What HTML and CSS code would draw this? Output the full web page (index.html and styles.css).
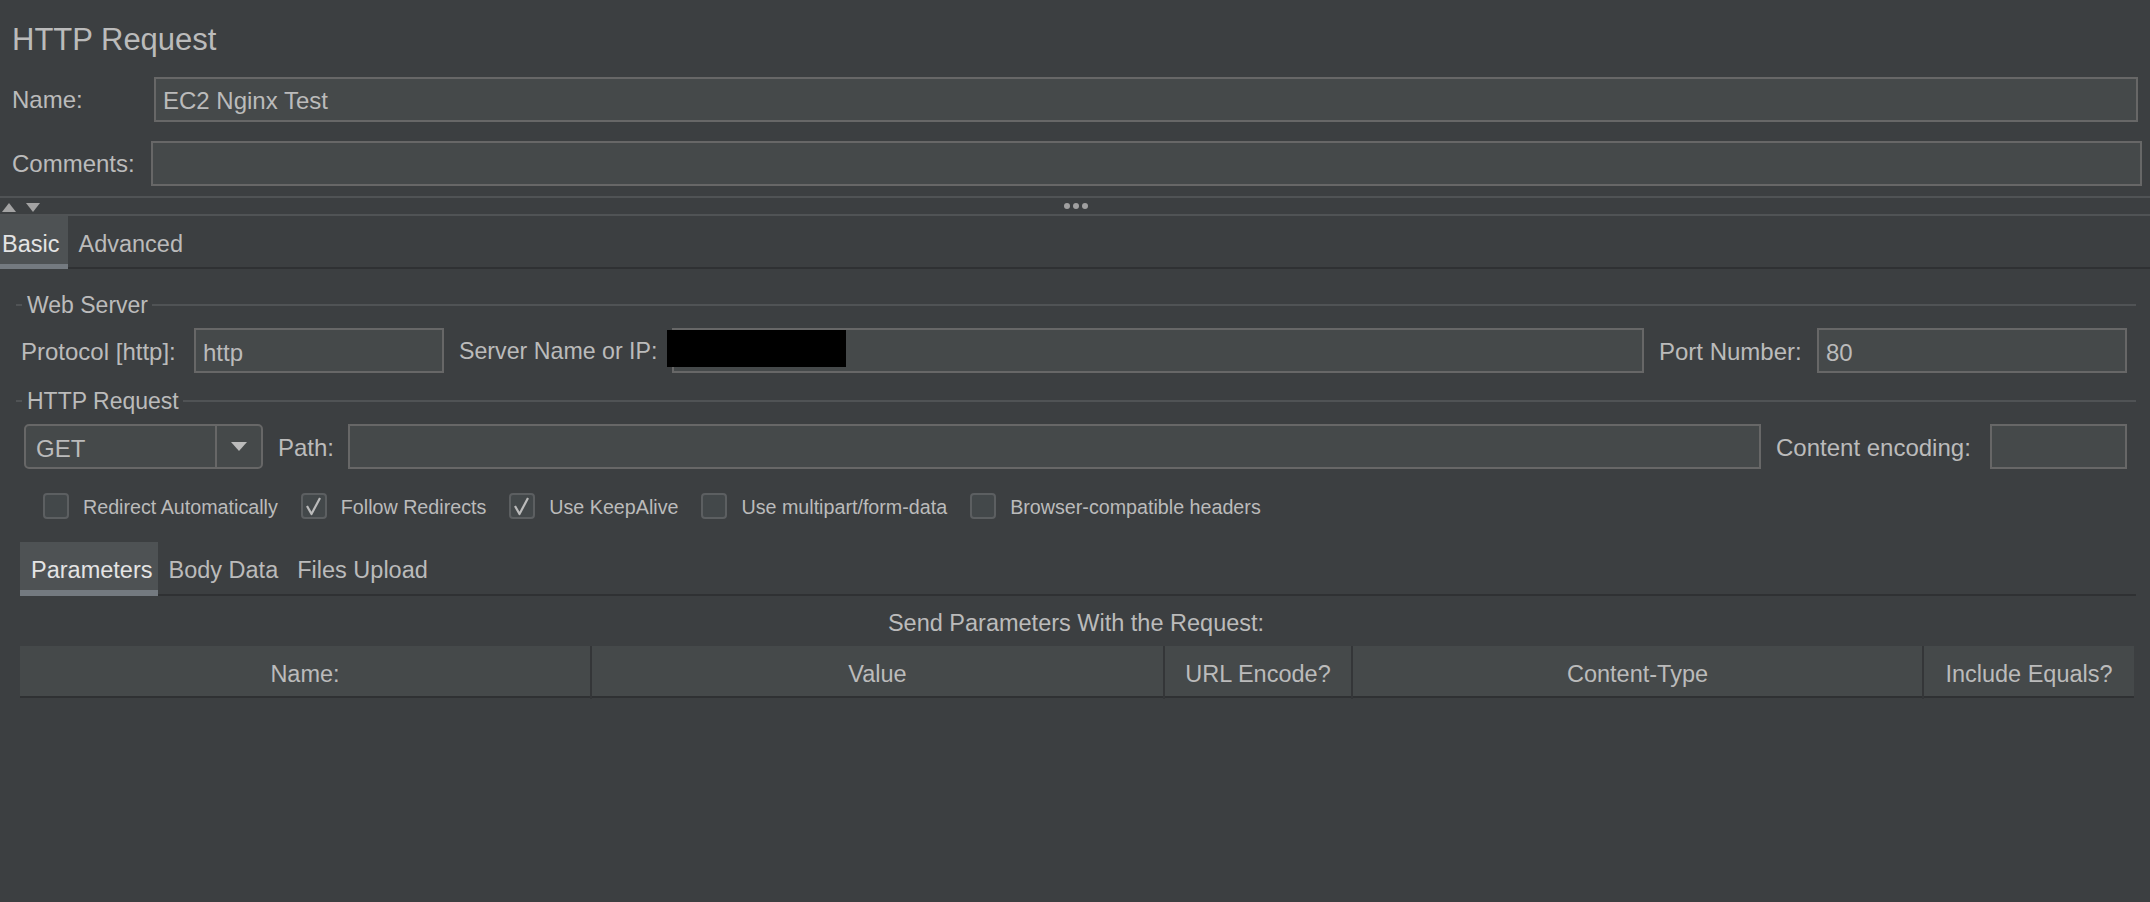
FILE: index.html
```html
<!DOCTYPE html>
<html>
<head>
<meta charset="utf-8">
<title>HTTP Request</title>
<link rel="stylesheet" href="styles.css">
</head>
<body>
<div class="title">HTTP Request</div>

<div class="form-row name-row">
  <span class="lbl">Name:</span>
  <div class="field">EC2 Nginx Test</div>
</div>
<div class="form-row comments-row">
  <span class="lbl">Comments:</span>
  <div class="field"></div>
</div>

<div class="splitter">
  <svg class="arrows" width="42" height="16" viewBox="0 0 42 16">
    <polygon points="2,14 16,14 9,5" fill="#a3a3a3"/>
    <polygon points="26,5 40,5 33,14" fill="#a3a3a3"/>
  </svg>
  <svg class="dots" width="26" height="16" viewBox="0 0 26 16">
    <circle cx="4" cy="8" r="3" fill="#a0a0a0"/>
    <circle cx="13" cy="8" r="3" fill="#a0a0a0"/>
    <circle cx="22" cy="8" r="3" fill="#a0a0a0"/>
  </svg>
  <span></span>
</div>

<div class="tabs main-tabs">
  <div class="tab active tab-basic">Basic</div>
  <div class="tab">Advanced</div>
</div>

<div class="basic">
  <div class="legend legend-first"><span>Web Server</span></div>
  <div class="frow frow-server">
    <span class="lbl lbl-protocol">Protocol [http]:</span>
    <div class="field f-protocol">http</div>
    <span class="lbl lbl-server">Server Name or IP:</span>
    <div class="field f-server"><span class="redact"></span></div>
    <span class="lbl lbl-port">Port Number:</span>
    <div class="field f-port">80</div>
  </div>

  <div class="legend legend-second"><span>HTTP Request</span></div>
  <div class="frow frow-path">
    <div class="combo">
      <span class="combo-text">GET</span>
      <span class="combo-btn">
        <svg width="16" height="9" viewBox="0 0 16 9"><polygon points="0,0 16,0 8,9" fill="#bbbbbb"/></svg>
      </span>
    </div>
    <span class="lbl lbl-path">Path:</span>
    <div class="field f-path"></div>
    <span class="lbl lbl-enc">Content encoding:</span>
    <div class="field f-enc"></div>
  </div>

  <div class="checks">
    <label class="check"><span class="box"></span><span>Redirect Automatically</span></label>
    <label class="check"><span class="box"><svg width="22" height="22" viewBox="0 0 22 22"><path d="M4 11 L8.5 19 L17 3" fill="none" stroke="#bbbbbb" stroke-width="2.2" stroke-linejoin="round"/></svg></span><span>Follow Redirects</span></label>
    <label class="check"><span class="box"><svg width="22" height="22" viewBox="0 0 22 22"><path d="M4 11 L8.5 19 L17 3" fill="none" stroke="#bbbbbb" stroke-width="2.2" stroke-linejoin="round"/></svg></span><span>Use KeepAlive</span></label>
    <label class="check"><span class="box"></span><span>Use multipart/form-data</span></label>
    <label class="check"><span class="box"></span><span>Browser-compatible headers</span></label>
  </div>

  <div class="tabs sub-tabs">
    <div class="tab active tab-params">Parameters</div>
    <div class="tab">Body Data</div>
    <div class="tab">Files Upload</div>
  </div>

  <div class="send">Send Parameters With the Request:</div>

  <div class="thead">
    <div class="th">Name:</div>
    <div class="th">Value</div>
    <div class="th">URL Encode?</div>
    <div class="th">Content-Type</div>
    <div class="th">Include Equals?</div>
  </div>
</div>
</body>
</html>
```

FILE: styles.css
```css
* { box-sizing: border-box; }

html, body {
  margin: 0;
  padding: 0;
  background: #3c3f41;
}

body {
  width: 2150px;
  height: 902px;
  overflow: hidden;
  font-family: "Liberation Sans", Arial, sans-serif;
  font-size: 24px;
  color: #bbbbbb;
}

.title {
  margin: 16px 0 0 12px;
  height: 48px;
  line-height: 48px;
  font-size: 31px;
}

.form-row {
  display: flex;
  align-items: center;
  height: 45px;
}

.name-row { margin-top: 13px; padding: 0 12px; }
.name-row .lbl { width: 142px; flex: none; }
.comments-row { margin-top: 19px; padding: 0 8px 0 12px; }
.comments-row .lbl { width: 139px; flex: none; }

.lbl { white-space: nowrap; padding-top: 1px; }

.field {
  height: 45px;
  background: #45494a;
  border: 2px solid #676767;
  padding: 1px 7px 0;
  line-height: 41px;
  white-space: nowrap;
  flex: 1;
}

.splitter {
  margin-top: 10px;
  height: 20px;
  border-top: 2px solid #505355;
  border-bottom: 2px solid #505355;
  display: grid;
  grid-template-columns: 1fr auto 1fr;
  align-items: center;
}
.splitter svg { display: block; }
.dots { margin-left: 2px; }

.tabs {
  display: flex;
  background: linear-gradient(to top, #2f3133 2px, transparent 2px);
}

.tab {
  height: 100%;
  padding: 13px 9px 0 10px;
  line-height: 30px;
  border-bottom: 5px solid transparent;
  white-space: nowrap;
}
.tab.active {
  background: #4e5254;
  border-bottom-color: #747a80;
  color: #e4e4e4;
}

.main-tabs { height: 53px; font-size: 23.5px; }
.tab-basic { padding-left: 2px; padding-right: 9px; }

.basic { padding: 0 14px 0 16px; }

.legend {
  display: flex;
  align-items: center;
  height: 30px;
  font-size: 23px;
}
.legend span { padding-top: 1px; }
.legend::before {
  content: "";
  width: 6px;
  height: 2px;
  background: #505355;
  margin-right: 5px;
}
.legend::after {
  content: "";
  flex: 1;
  height: 2px;
  background: #505355;
  margin-left: 4px;
}
.legend-first { margin-top: 21px; }
.legend-second { margin-top: 13px; }

.frow {
  display: flex;
  align-items: center;
  height: 45px;
  margin-top: 8px;
  padding-right: 9px;
}
.frow-server { padding-left: 5px; }
.frow-path { padding-left: 8px; }
.frow .lbl, .frow .field { padding-top: 2px; }

.frow > .lbl { margin-right: 14px; flex: none; }
.frow > .field { margin-right: 15px; flex: none; }
.frow > .field:last-child { margin-right: 0; }

.lbl-protocol { width: 159px; }
.f-protocol { width: 250px; }
.lbl-server { width: 199px; font-size: 23.2px; }
.frow > .f-server { flex: 1; position: relative; }
.lbl-port { width: 144px; }
.f-port { width: 310px; }

.redact {
  position: absolute;
  left: -7px;
  top: 0;
  width: 179px;
  height: 37px;
  background: #000;
}

.combo {
  width: 239px;
  height: 45px;
  flex: none;
  display: flex;
  margin-right: 15px;
  background: #45494a;
  border: 2px solid #676767;
  border-radius: 5px;
  line-height: 41px;
}
.combo-text { flex: 1; padding: 2px 0 0 10px; }
.combo-btn {
  width: 46px;
  border-left: 2px solid #676767;
  display: flex;
  align-items: center;
  justify-content: center;
}
.combo-btn svg { display: block; }

.lbl-path { width: 55px; margin-right: 15px !important; }
.frow > .f-path { flex: 1; }
.lbl-enc { width: 200px; }
.f-enc { width: 137px; }

.checks {
  display: flex;
  align-items: center;
  height: 26px;
  margin-top: 24px;
  padding-left: 27px;
  gap: 23px;
  font-size: 19.7px;
}
.check {
  display: flex;
  align-items: center;
  gap: 14px;
  white-space: nowrap;
}
.check > span:last-child { padding-top: 2px; }
.box {
  width: 26px;
  height: 26px;
  border: 2px solid #5c5f61;
  border-radius: 4px;
  background: #43484a;
  display: flex;
  align-items: center;
  justify-content: center;
}
.box svg { display: block; }

.sub-tabs {
  height: 54px;
  margin-top: 23px;
  margin-left: 4px;
  font-size: 23.5px;
}
.sub-tabs .tab {
  padding-top: 13px;
  border-bottom-width: 6px;
}
.tab-params { padding-left: 11px !important; padding-right: 6px !important; }

.send {
  margin-top: 10px;
  height: 30px;
  padding-top: 2px;
  line-height: 30px;
  text-align: center;
  font-size: 23.5px;
}

.thead {
  margin: 10px 2px 0 4px;
  height: 52px;
  display: grid;
  grid-template-columns: 570px 573px 188px 571px 1fr;
  background: #45494a;
  border-bottom: 2px solid #2f3133;
  font-size: 23.5px;
}
.th {
  text-align: center;
  line-height: 50px;
  padding-top: 3px;
  border-left: 2px solid #343638;
  white-space: nowrap;
}
.th:first-child { border-left: none; }
```
